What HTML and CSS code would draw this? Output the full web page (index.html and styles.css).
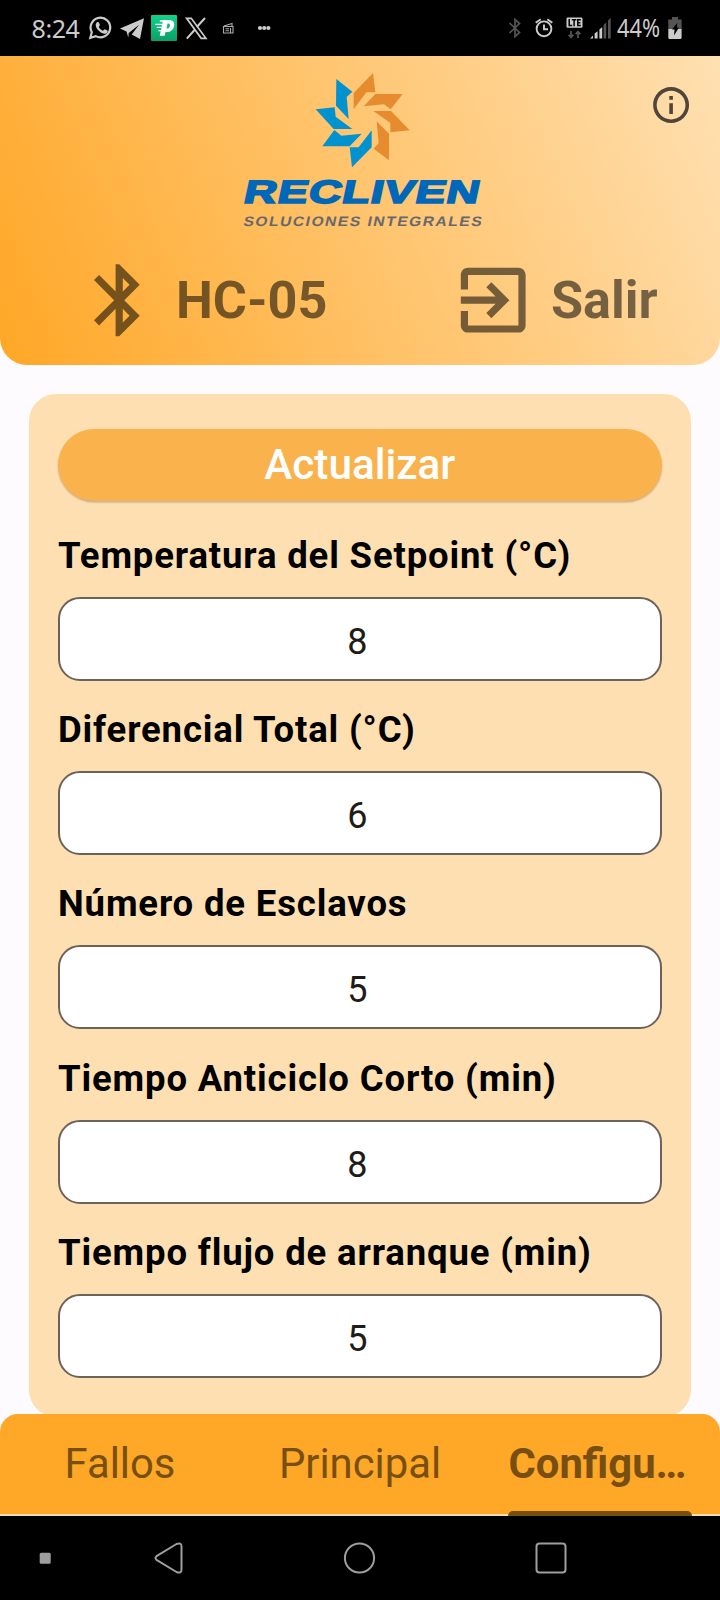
FILE: index.html
```html
<!DOCTYPE html>
<html lang="es">
<head>
<meta charset="utf-8">
<title>Recliven</title>
<link rel="stylesheet" href="styles.css">
</head>
<body>
<div class="status">
  <span class="time">8:24</span>
  <svg class="notif" width="190" height="56" viewBox="85 0 190 56">
    <g fill="none" stroke="#ccc" stroke-width="2.200">
      <path d="M90.300 37.800l1.500-5.600a9.800 9.800 0 1 1 3.900 3.900z"/>
    </g>
    <path fill="#ccc" d="M96.700 22.400c.8-.7 1.800-.6 2.200.2l1 2.500c.2.6-1.200 1.600-1.100 2 .9 1.800 2.200 2.900 4 3.700.5.100 1.500-1.700 2-1.600l2.600 1.300c.8.5-.1 2.500-1.300 3-2 .8-5-.5-7.300-2.800-2.800-2.800-4.100-6-2.100-8.300z"/>
    <path fill="#ccc" d="M120 28.600L144 18.200l-4 20.800-8.300-4.600 7.300-9.700-10.300 8.200-.4 4.500-1.800-6z"/>
    <defs><linearGradient id="g" x2="0" y2="1"><stop stop-color="#11d38a"/><stop offset="1" stop-color="#0aa068"/></linearGradient></defs>
    <rect x="151" y="15" width="26" height="26" rx="1" fill="url(#g)"/>
    <path fill="#fff" d="M160 20h9c4 0 6 2.500 5 6.500-.8 3.600-3.500 5.500-7 5.500h-1.500l-.8 3.800h-5l1-4.500h-2.500l.3-1.300h2.500l.4-2h-4.800l.3-1.300h4.800l.3-1.700h-7l.3-1.300h7l.4-1.900h-3zM167.500 23.500l-1 5h.8c1.500 0 2.300-.8 2.600-2.500.3-1.600-.2-2.500-1.600-2.500z"/>
    <path fill="none" stroke="#ccc" stroke-width="1.700" d="M186.600 18.300h4.700l14.600 20h-4.700z"/>
    <path stroke="#ccc" stroke-width="2" d="M205 18l-8.200 9M194.500 30l-7.700 8.700"/>
    <g fill="none" stroke="#aaa" stroke-width="1.100">
      <path d="M223.500 26.500h9.500v6.500h-9.500zM224 26l8-2.600v2.600M225.500 28.700h3.500M225.500 30.800h3.500M230.500 28v5"/>
    </g>
    <g fill="#ccc"><circle cx="260" cy="28" r="2.100"/><circle cx="264.200" cy="28" r="2.100"/><circle cx="268.400" cy="28" r="2.100"/></g>
  </svg>
  <svg class="sys" width="110" height="56" viewBox="505 0 110 56">
    <path fill="none" stroke="#555" stroke-width="1.700" d="M509.500 23l10 9.500-4.500 4V19.500l4.500 4-10 9.500"/>
    <g fill="none" stroke="#ccc" stroke-width="1.900">
      <circle cx="544" cy="28.800" r="7.400"/><path d="M544 24.500v4.800h4M535.700 22.800l5-3.600M552.300 22.800l-5-3.600"/>
    </g>
    <rect x="566.500" y="17.500" width="16" height="10.300" rx="1.200" fill="#ccc"/>
    <path fill="none" stroke="#000" stroke-width="1.500" d="M569.200 19v6.600h3M571.800 19.700h4.600M574.100 19.700v6.600M580.800 19.700h-3v5.900h3M577.800 22.700h2.600"/>
    <g fill="none" stroke="#555" stroke-width="1.700"><path d="M571 31v6M568.600 34.800l2.400 2.700 2.400-2.700M578 38v-6M575.600 34.200l2.400-2.700 2.400 2.700"/></g>
    <g fill="#ccc"><path d="M590 38.500l3-3v3zM594.600 33.500l3-2.200v7.200h-3zM599.400 29.500l2.800-2.500v11.500h-2.800z"/></g>
    <g fill="#555"><path d="M603.600 25l2.600-2.500v16h-2.600zM608 20.500l2.700-2.500v20.500H608z"/></g>
  </svg>
  <svg class="pct" width="53" height="56" viewBox="615 0 53 56"><text x="617" y="37" textLength="43" lengthAdjust="spacingAndGlyphs">44%</text></svg>
  <svg class="batt" width="14" height="56" viewBox="668 0 14 56">
    <path fill="#555" d="M672 17h6v2.500h3.600V29H668.300v-9.500h3.700z"/>
    <path fill="#ccc" d="M668.300 29h13.300v8.500q0 1.500-1.500 1.500h-10.300q-1.500 0-1.500-1.500z"/>
    <path fill="#000" d="M677.500 22.500l-5.500 7h2.500l-.5 6 5-8h-2.300z"/>
  </svg>
</div>

<header class="header">
  <svg class="logo" width="260" height="175" viewBox="0 0 780 525">
    <g fill="#0292cf">
      <path d="M319 57l48 38-17 16 6 66-38-40z"/>
      <path d="M257 148l57-6 3 28 50 37h-56z"/>
      <path d="M313 210l21 17 61-6-36 38h-82z"/>
      <path d="M359 262h27l39-51v51l-59 60z"/>
    </g>
    <g fill="#e68c2f">
      <path d="M429 39l7 58h-27l-38 51V99z"/>
      <path d="M436 102h82l-36 46-20-15-61 6z"/>
      <path d="M430 153h53l56 58-58 6v-28z"/>
      <path d="M440 184l37 37v80l-46-35 15-17z"/>
    </g>
    <text class="brand" transform="translate(37 429) skewX(-12)" x="0" y="0" textLength="708" lengthAdjust="spacingAndGlyphs">RECLIVEN</text>
    <text class="tagline" transform="translate(38 497) skewX(-12)" x="0" y="0" textLength="719" lengthAdjust="spacingAndGlyphs">SOLUCIONES INTEGRALES</text>
  </svg>
  <svg class="info" viewBox="0 0 24 24"><path d="M11 7h2v2h-2zm0 4h2v6h-2zm1-9C6.480 2 2 6.480 2 12s4.480 10 10 10 10-4.480 10-10S17.520 2 12 2zm0 18c-4.410 0-8-3.590-8-8s3.590-8 8-8 8 3.590 8 8-3.590 8-8 8z"/></svg>
  <div class="actions">
    <div class="action device">
      <svg viewBox="0 0 24 24"><path d="M17.710 7.710L12 2h-1v7.590L6.410 5 5 6.410 10.590 12 5 17.590 6.410 19 11 14.410V22h1l5.710-5.710-4.300-4.290 4.300-4.290zM13 5.830l1.880 1.880L13 9.590V5.830zm1.880 10.460L13 18.170v-3.760l1.880 1.880z"/></svg>
      <span>HC-05</span>
    </div>
    <div class="action exit">
      <svg viewBox="0 0 24 24"><path d="M10.090 15.590L11.500 17l5-5-5-5-1.410 1.410L12.670 11H3v2h9.670l-2.580 2.590zM19 3H5c-1.110 0-2 .9-2 2v4h2V5h14v14H5v-4H3v4c0 1.100.89 2 2 2h14c1.100 0 2-.9 2-2V5c0-1.100-.9-2-2-2z"/></svg>
      <span>Salir</span>
    </div>
  </div>
</header>

<main class="content">
  <section class="card">
    <button class="update">Actualizar</button>
    <div class="field"><label>Temperatura del Setpoint (°C)</label><div class="box">8</div></div>
    <div class="field"><label>Diferencial Total (°C)</label><div class="box">6</div></div>
    <div class="field"><label>Número de Esclavos</label><div class="box">5</div></div>
    <div class="field"><label>Tiempo Anticiclo Corto (min)</label><div class="box">8</div></div>
    <div class="field"><label>Tiempo flujo de arranque (min)</label><div class="box">5</div></div>
  </section>
</main>

<nav class="tabs">
  <div class="tab">Fallos</div>
  <div class="tab">Principal</div>
  <div class="tab active">Configu…</div>
</nav>

<div class="sysnav">
  <svg width="720" height="84" viewBox="0 1516 720 84">
    <rect x="39.700" y="1552.700" width="11" height="11" rx="1.500" fill="#9e9e9e"/>
    <g fill="none" stroke="#9e9e9e" stroke-width="2" stroke-linejoin="round">
      <path d="M156.500 1556.200Q154.500 1558 156.500 1559.800L176.500 1572Q181.500 1574 181.500 1569.500V1546.500Q181.500 1542 176.500 1544z"/>
      <circle cx="359.500" cy="1558" r="14.600"/>
      <rect x="536.500" y="1543.500" width="29" height="29" rx="3"/>
    </g>
  </svg>
</div>
</body>
</html>
```

FILE: styles.css
```css
* { box-sizing: border-box; }

body {
  margin: 0;
  width: 720px;
  height: 1600px;
  display: flex;
  flex-direction: column;
  overflow: hidden;
  background: #fefbff;
  font-family: Roboto, "Noto Sans", sans-serif;
}

svg { display: block; flex: none; }

.status {
  flex: none;
  height: 56px;
  display: flex;
  align-items: center;
  background: #000;
  color: #ccc;
  font-family: "Noto Sans", Roboto, sans-serif;
}
.time { width: 85px; padding-left: 31.500px; font-size: 25px; letter-spacing: -0.400px; white-space: nowrap; }
.sys { margin-left: 230px; }
.pct { font-size: 25px; fill: #ccc; }

.header {
  flex: none;
  position: relative;
  height: 309px;
  padding-top: 4px;
  border-radius: 0 0 27px 27px;
  background: linear-gradient(66.800deg, #ffa726, #ffe0b2);
}
.logo { margin-left: 230px; }
.brand {
  font: bold 97px "Liberation Sans", sans-serif;
  letter-spacing: 2px;
  fill: #0067b9;
  stroke: #0067b9;
  stroke-width: 5px;
}
.tagline {
  font: bold 41px "Liberation Sans", sans-serif;
  letter-spacing: 4px;
  fill: #67686f;
}
.info {
  position: absolute;
  right: 27.400px;
  top: 27.400px;
  width: 43.200px;
  height: 43.200px;
  fill: #50453a;
  transform: translate(0.500px, 0.500px);
}
.actions { display: flex; margin-top: 22px; }
.action {
  display: flex;
  align-items: center;
  height: 86.400px;
  font-size: 52.200px;
  line-height: 60px;
  font-weight: 700;
  color: rgba(0, 0, 0, 0.540);
}
.action svg { width: 86.400px; height: 86.400px; fill: currentColor; }
.action span { padding-top: 1px; }
.device { width: 374px; padding-left: 76px; gap: 13.600px; }
.exit { padding-left: 76px; gap: 14.500px; }

.content { flex: none; height: 1049px; padding: 29px 29px 0; }
.card {
  height: 1023px;
  padding: 34.600px 29px 0 28.500px;
  border-radius: 27px;
  background: #fedfb1;
}
.update {
  display: block;
  width: 100%;
  height: 72px;
  padding: 0;
  border: 0;
  border-radius: 36px;
  background: #f9b24c;
  color: #fff;
  font: 500 42.300px/71px Roboto, sans-serif;
  box-shadow: 0 1.500px 2px rgba(0, 0, 0, 0.220);
}
.field { height: 174.200px; padding-top: 30.500px; }
.field label {
  display: block;
  height: 66px;
  padding-left: 0.500px;
  line-height: 50px;
  font-size: 36.500px;
  font-weight: 700;
  letter-spacing: 0.850px;
  color: #000;
  white-space: nowrap;
}
.box {
  height: 84px;
  border: 2px solid #6c6259;
  border-radius: 22px;
  background: #fff;
  color: #1f1b16;
  font-size: 36px;
  line-height: 86px;
  text-align: center;
  padding-right: 5px;
}

.tabs {
  flex: none;
  position: relative;
  height: 102px;
  display: grid;
  grid-template-columns: repeat(3, 240px);
  border-radius: 18px 18px 0 0;
  border-bottom: 2px solid #f8dcba;
  background: #ffa726;
  color: #784f12;
  font-size: 41.800px;
  line-height: 99px;
  text-align: center;
}
.tab { position: relative; white-space: nowrap; }
.active { font-weight: 700; padding-right: 5px; }
.active::after {
  content: "";
  position: absolute;
  left: 28px;
  top: 97px;
  width: 184px;
  height: 5px;
  border-radius: 5px 5px 0 0;
  background: #784f12;
}
.sysnav { flex: none; height: 84px; background: #000; }
```
